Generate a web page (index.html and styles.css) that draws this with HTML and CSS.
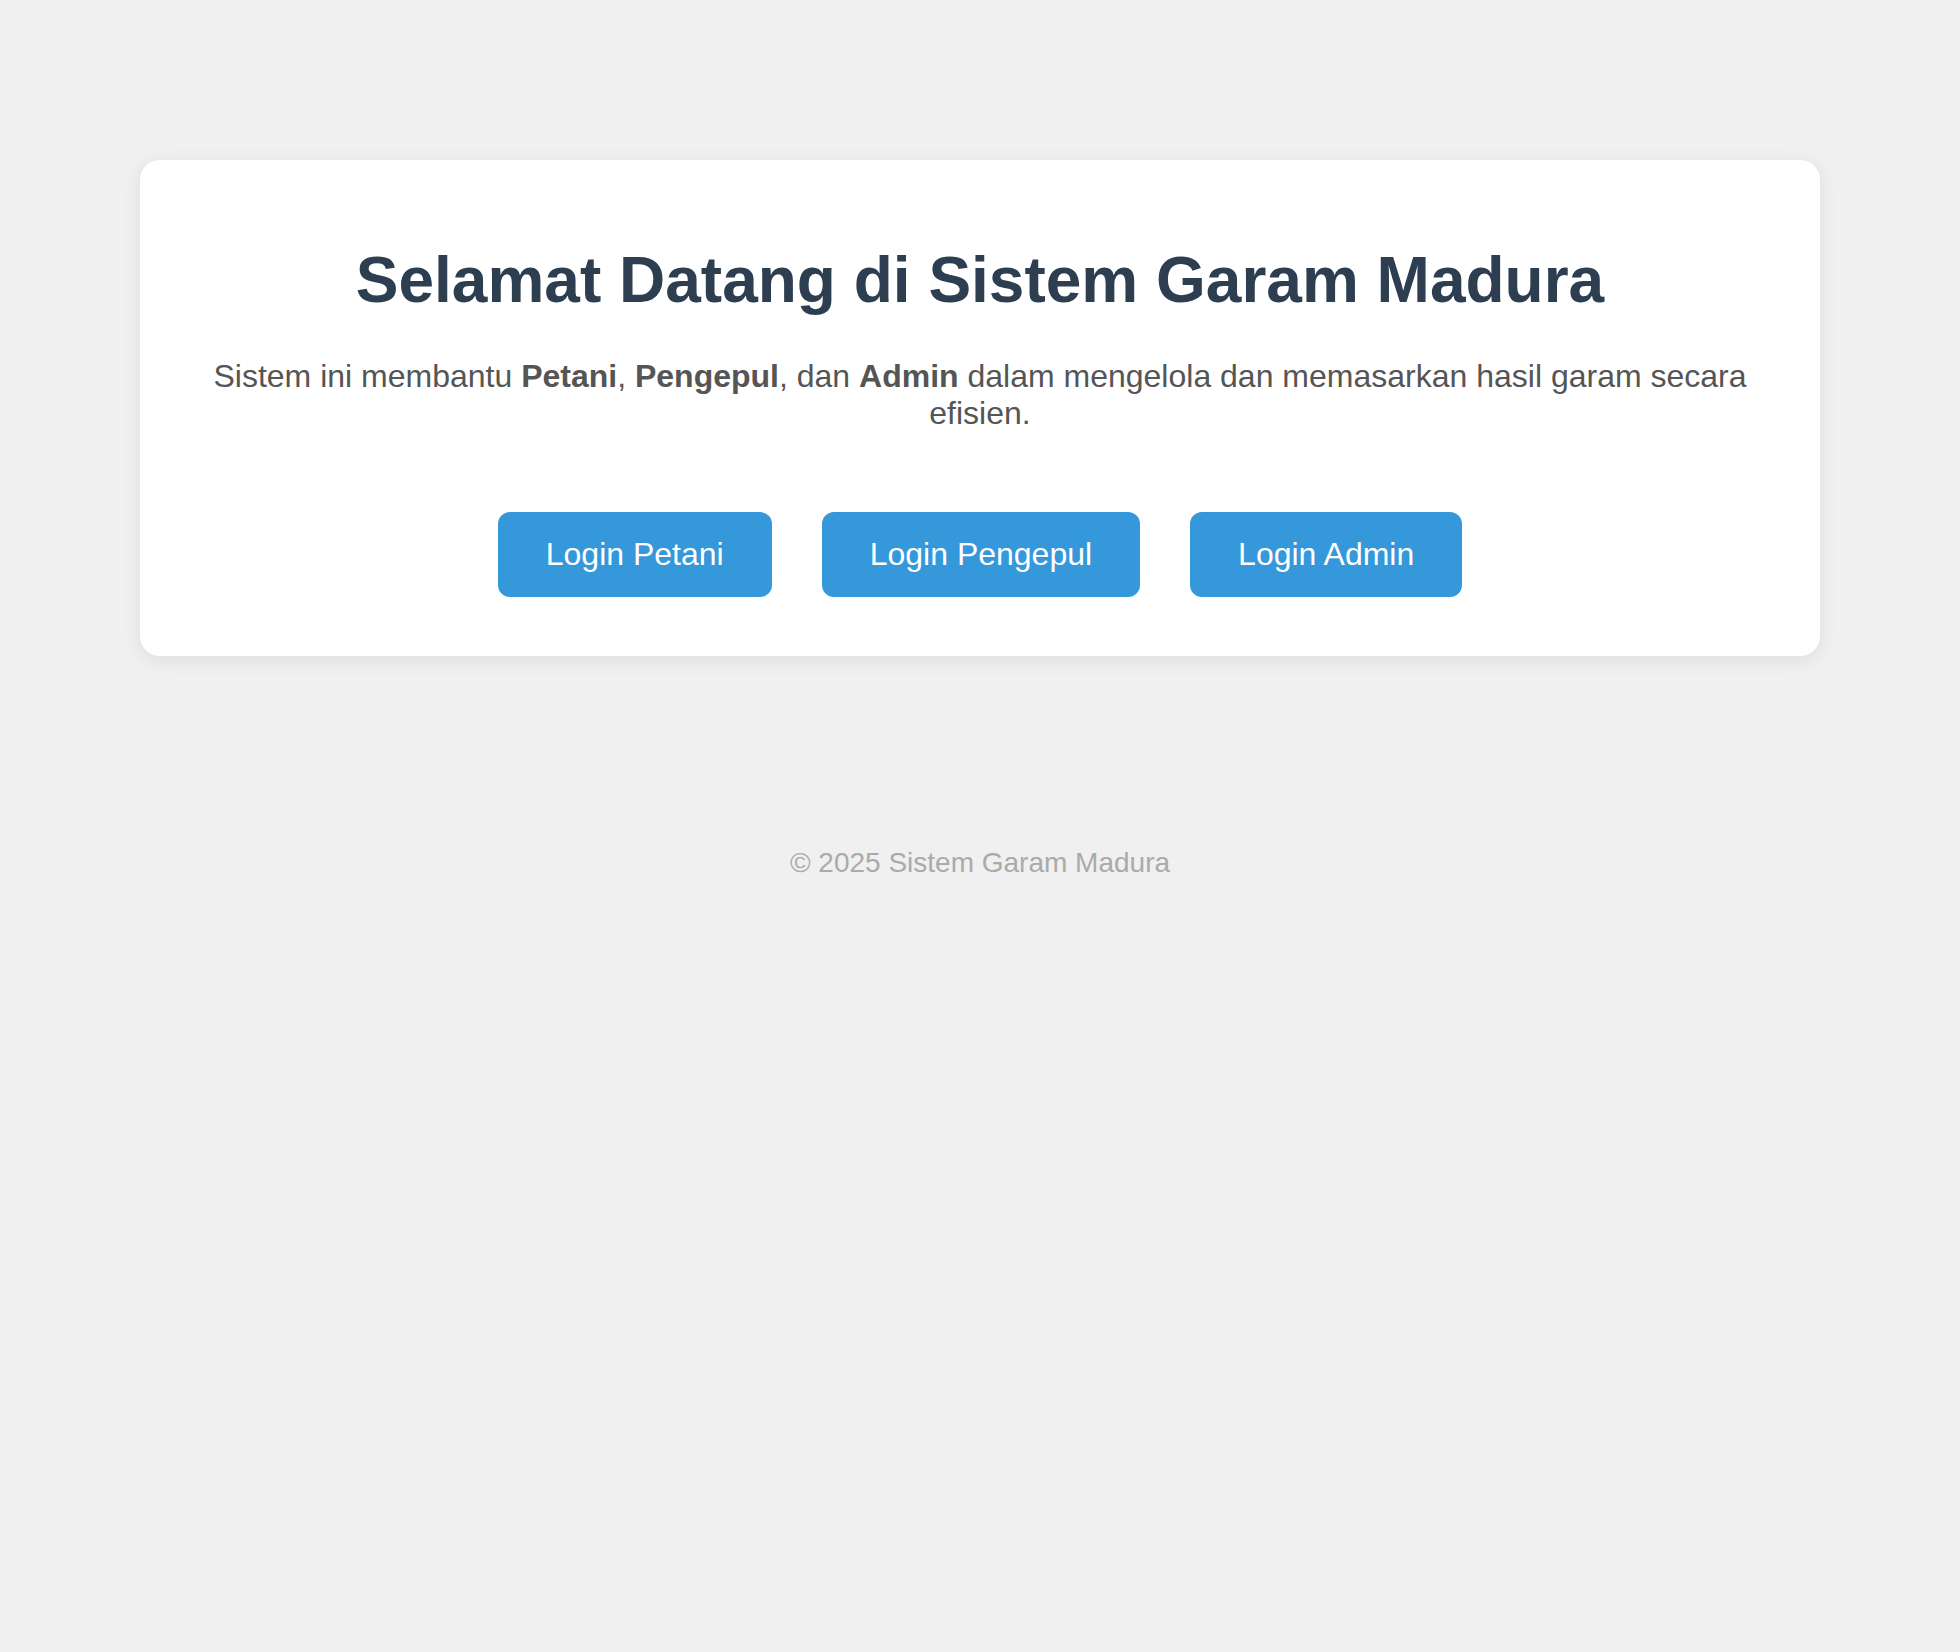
FILE: index.html
```html
<!DOCTYPE html>
<html lang="id">
<head>
<meta charset="utf-8">
<title>Sistem Garam Madura</title>
<link rel="stylesheet" href="styles.css">
</head>
<body>
<main class="card">
  <h1 class="title">Selamat Datang di Sistem Garam Madura</h1>
  <p class="intro">Sistem ini membantu <strong>Petani</strong>, <strong>Pengepul</strong>, dan <strong>Admin</strong> dalam mengelola dan memasarkan hasil garam secara efisien.</p>
  <div class="actions">
    <a class="btn" href="#">Login Petani</a>
    <a class="btn" href="#">Login Pengepul</a>
    <a class="btn" href="#">Login Admin</a>
  </div>
</main>
<footer class="footer">© 2025 Sistem Garam Madura</footer>
</body>
</html>
```

FILE: styles.css
```css
html, body {
  margin: 0;
  padding: 0;
}

body {
  background: #f0f0f0;
  font-family: "Liberation Sans", Arial, sans-serif;
  padding: 160px 140px 0;
  min-height: 1652px;
  box-sizing: border-box;
}

.card {
  display: block;
  background: #ffffff;
  border-radius: 20px;
  box-shadow: 0 4px 20px rgba(0, 0, 0, 0.08);
  padding: 40px;
  text-align: center;
}

.title {
  margin: 42.9px 0 41px;
  font-size: 64px;
  font-weight: bold;
  line-height: normal;
  color: #2c3e50;
}

.intro {
  margin: 0 0 80.5px;
  font-size: 32px;
  line-height: normal;
  color: #555555;
}

.intro strong {
  font-weight: bold;
}

.actions {
  display: flex;
  justify-content: center;
  gap: 50px;
  margin-bottom: 19px;
}

.btn {
  display: block;
  background: #3498db;
  color: #ffffff;
  text-decoration: none;
  font-size: 32px;
  line-height: normal;
  padding: 24px 48px;
  border-radius: 12px;
}

.footer {
  margin-top: 190.9px;
  text-align: center;
  font-size: 28px;
  line-height: normal;
  color: #aaaaaa;
}
```
